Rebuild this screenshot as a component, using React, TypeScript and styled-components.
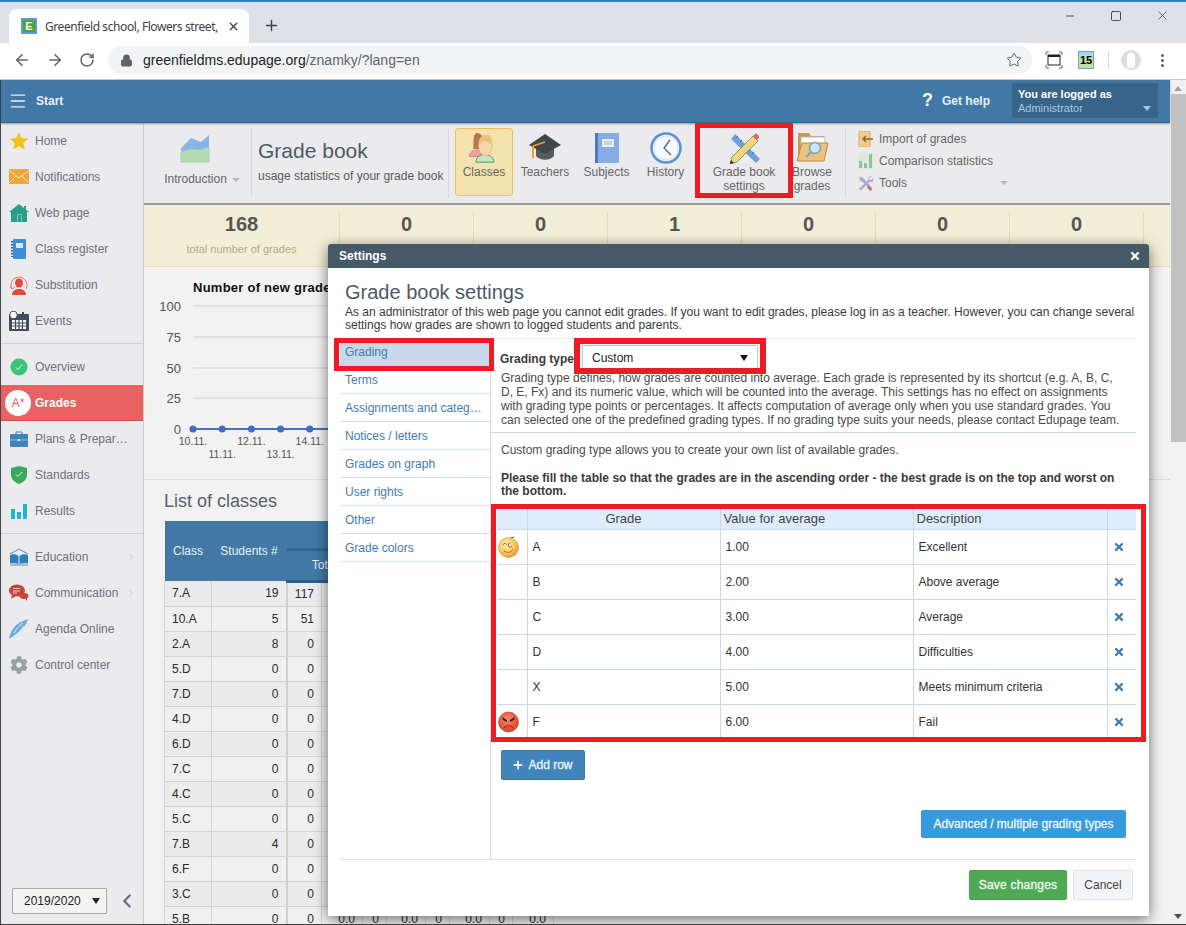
import React from 'react';
import styled, { createGlobalStyle } from 'styled-components';
import { ArrowLeft, ArrowRight, RotateCw, Lock, Star, X, Plus, Minus, Square, Menu, ChevronLeft, ChevronRight } from 'lucide-react';
import { FaCog, FaTimes, FaPlus } from 'react-icons/fa';

const GlobalStyle = createGlobalStyle`
    html, body {
        margin: 0;
        padding: 0;
        height: 925px;
        overflow: hidden;
        font-family: "Liberation Sans", Arial, sans-serif;
        font-size: 12px;
        color: #333;
    }
    * { box-sizing: border-box; }
`;

const Root = styled.div`
    position: relative;
    width: 1186px;
    height: 925px;
    overflow: hidden;
    display: flex;
    flex-direction: column;
    border-top: 2px solid #1b86d8;
    border-bottom: 1px solid #3d3f34;
`;

/* browser chrome */
const TabStrip = styled.div`
    height: 41px;
    flex: none;
    background: #dee1e6;
    display: flex;
    align-items: flex-end;
    padding-left: 9px;
`;
const Tab = styled.div`
    width: 240px;
    height: 34px;
    background: #fff;
    border-radius: 8px 8px 0 0;
    display: flex;
    align-items: center;
    padding-left: 12px;
    color: #3c4043;
`;
const Favicon = styled.span`
    width: 16px;
    height: 16px;
    flex: none;
    background: #fff;
    border: 2px solid #5a9bd8;
    color: #fff;
    font: bold 11px/12px "Liberation Sans", sans-serif;
    text-align: center;
    span {
        display: block;
        background: #4aa52c;
        height: 12px;
    }
`;
const TabTitle = styled.span`
    width: 173px;
    margin-left: 8px;
    overflow: hidden;
    white-space: nowrap;
    font-size: 12px;
    font-family: "Noto Sans", sans-serif;
    letter-spacing: -0.42px;
`;
const TabClose = styled.span`
    margin-left: 9px;
    display: flex;
    color: #45484c;
`;
const NewTab = styled.span`
    margin: 0 0 9px 14px;
    display: flex;
    color: #3c4043;
`;
const WindowButtons = styled.div`
    margin: 0 0 auto auto;
    display: flex;
    padding-right: 1px;
`;
const WindowButton = styled.span`
    width: 46px;
    height: 27px;
    display: flex;
    align-items: center;
    justify-content: center;
    color: #222;
`;
const BrowserBar = styled.div`
    height: 37px;
    flex: none;
    background: #fff;
    border-bottom: 1px solid #c8c9cb;
    display: flex;
    align-items: center;
    padding: 0 0 2px 13px;
`;
const NavIcon = styled.span`
    width: 18px;
    margin-right: 15px;
    display: flex;
    color: #5f6368;
`;
const Omnibox = styled.div`
    width: 924px;
    height: 28px;
    margin-left: -4px;
    background: #f1f3f4;
    border-radius: 14px;
    display: flex;
    align-items: center;
    padding-left: 12px;
    color: #5f6368;
    font-size: 14px;
`;
const Url = styled.span`
    margin-left: 10px;
    b { font-weight: normal; color: #222; }
`;
const OmniStar = styled.span`
    margin-left: auto;
    margin-right: 10px;
    display: flex;
    color: #5f6368;
`;
const ExtIcon = styled.span`
    margin-left: 13px;
    display: flex;
`;
const Badge15 = styled.span`
    width: 16px;
    height: 18px;
    margin-left: 15px;
    background: linear-gradient(#a8d4f0 0 3px, #bfe3a8 3px);
    border: 1px solid #6ba4d8;
    color: #000;
    font: bold 11px/17px "Liberation Sans", sans-serif;
    text-align: center;
`;
const BarDivider = styled.span`
    width: 1px;
    height: 18px;
    margin-left: 14px;
    background: #d5d7da;
`;
const Avatar = styled.span`
    width: 20px;
    height: 20px;
    margin-left: 12px;
    border-radius: 50%;
    background: #dcdcdc;
    display: flex;
    align-items: center;
    justify-content: center;
    &::after {
        content: '';
        width: 8px;
        height: 15px;
        border-radius: 4px 4px 2px 2px;
        background: #fff;
    }
`;
const Dots = styled.span`
    margin-left: 20px;
    display: flex;
    flex-direction: column;
    gap: 2px;
    i {
        width: 3px;
        height: 3px;
        border-radius: 50%;
        background: #5f6368;
    }
`;

/* app frame */
const Page = styled.div`
    flex: 1;
    min-height: 0;
    display: flex;
    border-left: 1px solid #3d4650;
`;
const AppColumn = styled.div`
    width: 1169px;
    display: flex;
    flex-direction: column;
`;
const Scrollbar = styled.div`
    width: 16px;
    background: #f1f1f1;
    display: flex;
    flex-direction: column;
    align-items: center;
    &::before {
        content: '';
        margin: 6px 0 3px;
        border: 4px solid transparent;
        border-top: 0;
        border-bottom: 5px solid #a3a3a3;
    }
    &::after {
        content: '';
        margin-top: auto;
        margin-bottom: 5px;
        border: 4px solid transparent;
        border-bottom: 0;
        border-top: 5px solid #505050;
    }
`;
const ScrollThumb = styled.div`
    width: 15px;
    height: 348px;
    background: #c1c1c1;
`;
const AppHeader = styled.header`
    height: 43px;
    flex: none;
    background: #4178a6;
    border-bottom: 1px solid #35648a;
    box-shadow: 0 1px 2px rgba(0, 0, 0, 0.35);
    position: relative;
    z-index: 1;
    display: flex;
    align-items: center;
    padding: 0 12px 1px 7px;
    color: #fff;
    font-weight: bold;
`;
const StartLabel = styled.span`
    margin-left: 8px;
    color: #e8f0f6;
`;
const HelpLink = styled.span`
    margin-left: auto;
    display: flex;
    align-items: center;
    gap: 9px;
    color: #e8f0f6;
`;
const HelpMark = styled.span`
    font-size: 18px;
    color: #fff;
`;
const UserBox = styled.div`
    width: 146px;
    height: 35px;
    margin-left: 22px;
    padding: 4px 6px;
    background: #38648a;
    border-radius: 2px;
    position: relative;
    font-size: 11px;
    line-height: 14px;
    em {
        display: block;
        font-style: normal;
        font-weight: normal;
        color: #a9c5e2;
    }
    &::after {
        content: '';
        position: absolute;
        right: 7px;
        bottom: 7px;
        border: 4px solid transparent;
        border-bottom: 0;
        border-top: 5px solid #a9c5e2;
    }
`;
const Body = styled.div`
    flex: 1;
    min-height: 0;
    display: flex;
`;

/* sidebar */
const Sidebar = styled.nav`
    width: 143px;
    flex: none;
    background: #ebebed;
    border-right: 1px solid #c9c9cb;
    display: flex;
    flex-direction: column;
    padding-bottom: 10px;
`;
const SideItem = styled.div<{ $active?: boolean }>`
    height: 36px;
    flex: none;
    display: flex;
    align-items: center;
    padding-left: 8px;
    color: ${p => (p.$active ? '#fff' : '#6f6f80')};
    font-weight: ${p => (p.$active ? 'bold' : 'normal')};
    background: ${p => (p.$active ? '#e96161' : 'transparent')};
    border-bottom: ${p => (p.$active ? '1px solid #d65050' : '0')};
`;
const SideIcon = styled.span`
    width: 20px;
    height: 22px;
    margin-right: 6px;
    flex: none;
    display: flex;
    align-items: center;
    justify-content: center;
`;
const GradeBubble = styled.span`
    width: 26px;
    height: 26px;
    margin: 0 4px 0 -4px;
    flex: none;
    border-radius: 50%;
    background: #fff;
    color: #e25c5c;
    font: 12px/26px "Liberation Sans", sans-serif;
    text-align: center;
`;
const SideMore = styled.span`
    margin-left: auto;
    margin-right: 6px;
    display: flex;
    color: #ccc;
`;
const SideDivider = styled.hr<{ $top: number; $bottom: number }>`
    width: 100%;
    margin: ${p => p.$top}px 0 ${p => p.$bottom}px;
    border: 0;
    border-top: 1px solid #d0d0d2;
`;
const YearRow = styled.div`
    margin-top: auto;
    padding-left: 11px;
    display: flex;
    align-items: center;
    gap: 9px;
    color: #5f7488;
`;
const YearSelect = styled.div`
    width: 95px;
    height: 26px;
    padding: 0 6px 0 11px;
    background: #f4f4f4;
    border: 1px solid #a9a9a9;
    border-radius: 1px;
    color: #222;
    display: flex;
    align-items: center;
    justify-content: space-between;
    &::after {
        content: '';
        border: 4px solid transparent;
        border-bottom: 0;
        border-top: 6px solid #222;
    }
`;

/* content */
const Content = styled.main`
    flex: 1;
    min-width: 0;
    background: #f2f2f2;
    overflow: hidden;
`;
const Toolbar = styled.div`
    height: 82px;
    background: #ebebed;
    border-bottom: 2px solid #96999c;
    display: flex;
    align-items: flex-start;
    padding-top: 5px;
    color: #666;
`;
const IntroBlock = styled.div`
    width: 108px;
    height: 70px;
    border-right: 1px solid #d9d9db;
    display: flex;
    flex-direction: column;
    align-items: center;
    padding: 3px 0 0 9px;
    gap: 9px;
    white-space: nowrap;
    svg { margin-right: 14px; }
`;
const Caret = styled.span`
    display: inline-block;
    margin-left: 5px;
    vertical-align: 1px;
    border: 4px solid transparent;
    border-bottom: 0;
    border-top: 4px solid #bbb;
`;
const TitleBlock = styled.div`
    width: 197px;
    height: 70px;
    border-right: 1px solid #d9d9db;
    padding: 10px 0 0 6px;
    white-space: nowrap;
    h1 {
        margin: 0 0 5px;
        font-size: 21px;
        line-height: 26px;
        font-weight: normal;
        color: #4c5a68;
    }
    p {
        margin: 0;
        color: #5a5a5a;
    }
`;
const ToolButton = styled.div<{ $w: number; $active?: boolean }>`
    width: ${p => p.$w}px;
    height: 68px;
    flex: none;
    display: flex;
    flex-direction: column;
    align-items: center;
    padding-top: 3px;
    line-height: 14px;
    text-align: center;
    border-radius: 3px;
    border: 1px solid ${p => (p.$active ? '#eebf4f' : 'transparent')};
    background: ${p => (p.$active ? '#f4e3ae' : 'transparent')};
    svg { flex: none; margin-bottom: 1px; }
`;
const ToolGroup = styled.div`
    display: flex;
    margin-left: 6px;
`;
const ToolLinks = styled.div`
    width: 163px;
    height: 70px;
    margin-left: 14px;
    border-left: 1px solid #d9d9db;
    padding: 3px 0 0 12px;
    display: flex;
    flex-direction: column;
    gap: 6px;
`;
const ToolLink = styled.div`
    height: 16px;
    display: flex;
    align-items: center;
    gap: 5px;
    white-space: nowrap;
    svg { flex: none; width: 16px; }
`;
const ToolsCaret = styled(Caret)`
    margin-left: auto;
    margin-right: 0;
    flex: none;
`;
const StatsBand = styled.div`
    height: 62px;
    background: #f3eed6;
    border-bottom: 1px solid #e6dcb0;
    display: grid;
    grid-template-columns: 196px repeat(6, 134px);
    padding-top: 7px;
`;
const StatCell = styled.div`
    height: 32px;
    border-right: 1px solid #e6dcb8;
    text-align: center;
    strong {
        display: block;
        font-size: 20px;
        line-height: 25px;
        color: #555;
    }
    span {
        display: block;
        margin-top: 6px;
        font-size: 11px;
        white-space: nowrap;
        color: #b4a988;
    }
`;
const ChartSection = styled.section`
    height: 213px;
    border-bottom: 1px solid #dcdcdc;
    padding-top: 13px;
    h4 {
        margin: 0 0 -1px 49px;
        font-size: 13px;
        line-height: 16px;
        letter-spacing: 0.25px;
        color: #111;
        white-space: nowrap;
    }
    svg { display: block; }
`;
const ListSection = styled.section`
    padding: 10px 0 0 20px;
    h3 {
        margin: 0 0 9px;
        font-size: 18px;
        line-height: 22px;
        font-weight: normal;
        color: #56606e;
    }
`;
const ClassTable = styled.table`
    width: 389px;
    table-layout: fixed;
    border-collapse: collapse;
    thead th {
        background: #4178a6;
        color: #e8f0f6;
        font-weight: normal;
        height: 30px;
        padding: 0;
    }
    thead tr:last-child th { border-bottom: 3px solid #2f5f88; }
    tbody td {
        height: 25px;
        padding: 0 7px;
        color: #2a2a2a;
        background: #f0f0f0;
        border: 1px solid #d2d2d2;
        border-top: 0;
        text-align: right;
    }
    tbody tr:nth-child(odd) td { background: #ebebeb; }
    tbody td:first-child { text-align: left; }
    tbody td:nth-child(2) { border-right: 2px solid #cfcfcf; }
`;
const GroupHead = styled.th`
    vertical-align: bottom;
    &::before {
        content: '';
        display: block;
        height: 3px;
        background: #35648a;
    }
`;

/* settings dialog */
const Dialog = styled.div`
    position: absolute;
    left: 328px;
    top: 242px;
    width: 821px;
    height: 672px;
    background: #fff;
    border-radius: 3px 3px 0 0;
    box-shadow: 0 3px 14px rgba(0, 0, 0, 0.55);
    display: flex;
    flex-direction: column;
    z-index: 2;
`;
const DialogBar = styled.div`
    height: 24px;
    flex: none;
    background: #465966;
    border-radius: 3px 3px 0 0;
    padding: 0 8px 0 11px;
    display: flex;
    align-items: center;
    justify-content: space-between;
    color: #fff;
    font-weight: bold;
`;
const DialogHead = styled.div`
    padding: 12px 12px 0 17px;
    h2 {
        margin: 0 0 2px;
        font-size: 20px;
        line-height: 24px;
        font-weight: normal;
        color: #4c5a68;
    }
    p {
        margin: 0;
        line-height: 13px;
        color: #3a3a3a;
    }
`;
const DialogColumns = styled.div`
    height: 522px;
    flex: none;
    margin: 6px 13px 0 12px;
    border-top: 1px solid #e8edf2;
    border-bottom: 1px solid #d5dce3;
    display: flex;
`;
const DialogNav = styled.div`
    width: 151px;
    flex: none;
    margin-top: -1px;
    border-right: 1px solid #c7d9ea;
`;
const NavEntry = styled.div<{ $active?: boolean }>`
    height: 28px;
    padding-left: 5px;
    display: flex;
    align-items: center;
    color: #3f7cb0;
    white-space: nowrap;
    border-bottom: ${p => (p.$active ? '0' : '1px solid #d3dfeb')};
    background: ${p => (p.$active ? '#c9d9e9' : 'transparent')};
    box-shadow: ${p => (p.$active ? 'inset 0 3px 0 #fff' : 'none')};
`;
const DialogMain = styled.div`
    flex: 1;
    min-width: 0;
    padding-top: 6px;
    display: flex;
    flex-direction: column;
`;
const TypeRow = styled.div`
    height: 26px;
    padding: 1px 0 0 9px;
    display: flex;
    align-items: center;
    font-weight: bold;
    color: #3a3a3a;
`;
const TypeSelect = styled.div`
    width: 176px;
    height: 26px;
    margin: -1px 0 0 8px;
    padding: 0 9px;
    border: 1px solid #c4c4c4;
    display: flex;
    align-items: center;
    justify-content: space-between;
    font-weight: normal;
    color: #222;
    &::after {
        content: '';
        border: 4px solid transparent;
        border-bottom: 0;
        border-top: 6px solid #111;
    }
`;
const HelpText = styled.p`
    margin: 0;
    padding: 0 10px 5px;
    line-height: 14px;
    color: #4a4a4a;
    border-bottom: 1px solid #c7d9ea;
`;
const PlainText = styled.p`
    margin: 10px 0 0;
    padding-left: 10px;
    line-height: 14px;
    color: #4a4a4a;
`;
const BoldText = styled.p`
    margin: 15px 0 0;
    padding: 0 10px;
    line-height: 13px;
    font-weight: bold;
    color: #3a3a3a;
`;
const GradeTable = styled.table`
    width: 639px;
    margin: 11px 0 0 6px;
    table-layout: fixed;
    border-collapse: collapse;
    th, td {
        border-left: 1px solid #c7d9ea;
        border-bottom: 1px solid #c7d9ea;
        padding: 0 5px;
        text-align: left;
        color: #333;
    }
    th:first-child, td:first-child { border-left: 0; padding: 0 0 0 1px; }
    th {
        height: 20px;
        padding: 0 3px;
        background: #deecfb;
        font-size: 13px;
        font-weight: normal;
        color: #444;
    }
    td { height: 35px; }
    td svg { display: block; }
`;
const CenterHead = styled.th`
    && { text-align: center; }
`;
const RemoveCell = styled.td`
    && { padding: 0 6px 0 0; color: #3f7cb0; }
    svg { margin: 0 auto; }
`;
const AddRow = styled.button`
    width: 84px;
    height: 30px;
    margin: 10px 0 0 10px;
    padding: 0;
    border: 1px solid #3a76aa;
    border-radius: 2px;
    background: #4185bd;
    color: #e8f2fa;
    font: 12px "Liberation Sans", sans-serif;
    -webkit-text-stroke: 0.35px #e8f2fa;
    display: flex;
    align-items: center;
    justify-content: center;
    gap: 5px;
`;
const AdvancedButton = styled.button`
    width: 205px;
    height: 28px;
    margin: 30px 10px 0 auto;
    padding: 0;
    border: 0;
    border-radius: 2px;
    background: #369ade;
    color: #e8f4fc;
    font: 12px "Liberation Sans", sans-serif;
    -webkit-text-stroke: 0.35px #e8f4fc;
`;
const DialogFooter = styled.div`
    padding: 10px 16px 0 0;
    display: flex;
    justify-content: flex-end;
    gap: 6px;
`;
const SaveButton = styled.button`
    width: 98px;
    height: 30px;
    padding: 0;
    border: 1px solid #4aa14f;
    border-radius: 2px;
    background: #50a955;
    color: #eef8ee;
    font: 12px "Liberation Sans", sans-serif;
    letter-spacing: 0.2px;
    -webkit-text-stroke: 0.35px #eef8ee;
`;
const CancelButton = styled.button`
    width: 60px;
    height: 30px;
    padding: 0;
    border: 1px solid #dfe2e8;
    border-radius: 2px;
    background: #f3f4f8;
    color: #444;
    font: 12px "Liberation Sans", sans-serif;
`;
const RedBox = styled.div<{ $l: number; $t: number; $w: number; $h: number; $b: number }>`
    position: absolute;
    left: ${p => p.$l}px;
    top: ${p => p.$t - 2}px;
    width: ${p => p.$w}px;
    height: ${p => p.$h}px;
    border: ${p => p.$b}px solid #ed1c24;
    z-index: 3;
    pointer-events: none;
`;

/* drawn icons */
const StarIcon = () => (
    <svg width="20" height="20" viewBox="0 0 20 20"><path d="M10 1l2.7 6 6.6.7-5 4.4 1.5 6.5L10 15.200 4.200 18.600l1.500-6.500-5-4.400 6.600-.7z" fill="#efc31d" /></svg>
);
const MailIcon = () => (
    <svg width="20" height="16" viewBox="0 0 20 16"><rect width="20" height="15" fill="#eca63a" /><path d="M0 1l10 8 10-8M0 14l7-7M20 14l-7-7" stroke="#fbe6bf" fill="none" /></svg>
);
const HouseIcon = () => (
    <svg width="20" height="20" viewBox="0 0 20 20"><path d="M10 1L0 9h2v10h16V9h2l-3-2.400V3h-2v2z" fill="#2c9e88" /><rect x="8" y="11" width="5" height="8" fill="#6cc4b2" /><rect x="9" y="12" width="3" height="7" fill="#2c9e88" /></svg>
);
const RegisterIcon = () => (
    <svg width="16" height="20" viewBox="0 0 16 20"><rect x="2" width="13" height="20" rx="1" fill="#3e8fd6" /><path d="M1 2v16" stroke="#1d5e99" strokeWidth="2" strokeDasharray="1.500 1.500" /><rect x="5" y="4" width="7" height="5" fill="#d5e8f8" /></svg>
);
const SubstIcon = () => (
    <svg width="20" height="20" viewBox="0 0 20 20"><path d="M3 14A8 8 0 1 1 17 14" fill="none" stroke="#e8796d" /><path d="M1 11l2 3 3-2" fill="none" stroke="#e8796d" /><ellipse cx="10" cy="8" rx="4" ry="4.500" fill="#de4b3b" /><path d="M3 20c0-4 3-5 5-6h4c2 1 5 2 5 6z" fill="#de4b3b" /></svg>
);
const EventsIcon = () => (
    <svg width="20" height="20" viewBox="0 0 20 20"><rect y="3" width="20" height="17" rx="1" fill="#3f4d5c" /><rect x="3" y="9" width="14" height="9" fill="#fff" /><path d="M3 12h14M3 15h14M6.500 9v9M10 9v9M13.500 9v9" stroke="#3f4d5c" strokeWidth="1.200" /><circle cx="4.500" cy="4" r="3.800" fill="#fff" stroke="#3f4d5c" /><rect x="13" y="1" width="2" height="4" fill="#3f4d5c" /></svg>
);
const CheckIcon = () => (
    <svg width="18" height="18" viewBox="0 0 18 18"><circle cx="9" cy="9" r="8.500" fill="#3cc47c" /><path d="M6 9.500l2 2 4-5" stroke="#e4f8ec" fill="none" /></svg>
);
const CaseIcon = () => (
    <svg width="18" height="16" viewBox="0 0 18 16"><path d="M6 3V1h6v2" fill="none" stroke="#3d84ba" /><rect y="3" width="18" height="13" rx="1" fill="#3d84ba" /><path d="M0 9h18" stroke="#8ebcdc" /><rect x="8" y="8" width="2" height="2" fill="#e3f0fa" /></svg>
);
const ShieldIcon = () => (
    <svg width="16" height="18" viewBox="0 0 16 18"><path d="M8 0l8 2v7c0 4-3 7-8 9-5-2-8-5-8-9V2z" fill="#3ca85a" /><path d="M5 8.500l2 2 4-4.500" stroke="#e4f8ec" fill="none" /></svg>
);
const BarsIcon = () => (
    <svg width="16" height="16" viewBox="0 0 16 16"><rect y="6" width="4" height="10" fill="#1fb6d0" /><rect x="6" y="9" width="4" height="7" fill="#1fb6d0" /><rect x="12" y="1" width="4" height="15" fill="#1fb6d0" /></svg>
);
const BookIcon = () => (
    <svg width="20" height="18" viewBox="0 0 20 18"><path d="M1 6l9-5 9 5" fill="none" stroke="#4a8fc2" /><path d="M1 7c3-1 6-1 8.500 1v8C7 15 4 15 1 15.500zM19 7c-3-1-6-1-8.500 1v8c2.500-1 5.500-1 8.500-.5z" fill="#2f7fb8" /><path d="M1 17h18" stroke="#4a8fc2" /></svg>
);
const ChatIcon = () => (
    <svg width="20" height="18" viewBox="0 0 20 18"><ellipse cx="8" cy="6.500" rx="8" ry="6" fill="#c8433a" /><path d="M3 11l-1 4 5-3z" fill="#c8433a" /><path d="M4 4.500h7M4 7h7M4 9h4" stroke="#f5d0cc" /><ellipse cx="15" cy="12" rx="4.500" ry="3" fill="#c8433a" /><path d="M16 14l2 3 0-4z" fill="#c8433a" /></svg>
);
const PenIcon = () => (
    <svg width="20" height="20" viewBox="0 0 20 20"><path d="M0 20c1-6 4-12 10-16 3-2 6-3 9-4-1 3-2 6-5 9-3 4-8 7-14 11z" fill="#6aaede" /><path d="M5 14c2-4 5-7 9-10M9 14l6-7" stroke="#ebebed" fill="none" /></svg>
);
const ChartIcon = () => (
    <svg width="30" height="32" viewBox="0 0 30 32"><path d="M1 17L11 7l10 4 8-7v16H1z" fill="#88b4e8" /><path d="M1 21l10-3 9 1 9-3v15H1z" fill="#b5dbb5" stroke="#a3cfa9" /></svg>
);
const PeopleIcon = () => (
    <svg width="32" height="32" viewBox="0 0 33 34"><path d="M9 1c5 0 7 4 6 10l-1 7H5c1-7-1-16 4-17z" fill="#b3764e" /><path d="M1 25c1-5 6-6 10-6l5 7H1z" fill="#ec9fa6" stroke="#d47f88" /><path d="M8 32c0-6 5-8 9-8s10 2 10 8z" fill="#c7e6c8" stroke="#3c9a55" /><ellipse cx="18" cy="15" rx="7" ry="10" fill="#f6d8ae" stroke="#e4bb82" /><path d="M11 14c-1-7 3-11 8-11s7 5 6 11c-2-3-7-4-9-5-1 2-3 3-5 5z" fill="#e8c27a" /></svg>
);
const CapIcon = () => (
    <svg width="34" height="32" viewBox="0 0 34 32"><path d="M8 14v10c4 5 14 5 18 0V14z" fill="#56595e" /><path d="M17 2l16 11-16 9L1 13z" fill="#40464c" /><path d="M5 14l12-4" stroke="#f0a020" strokeWidth="1.500" /><path d="M5 14v12" stroke="#f0a020" strokeWidth="2" /></svg>
);
const NotebookIcon = () => (
    <svg width="26" height="32" viewBox="0 0 26 32"><rect x="1" y="1" width="24" height="30" rx="1" fill="#86aee4" /><rect x="1" y="1" width="3" height="30" fill="#4a78b8" /><rect x="8" y="7" width="12" height="8" fill="#e6effa" /><path d="M10 10h8M10 12h8" stroke="#9db8d8" /></svg>
);
const ClockIcon = () => (
    <svg width="32" height="32" viewBox="0 0 32 32"><circle cx="16" cy="16" r="14.500" fill="#f8fbff" stroke="#5c90d6" strokeWidth="2.500" /><circle cx="16" cy="16" r="12" fill="none" stroke="#cfe0f5" /><path d="M20 8l-6 8 7 7" stroke="#59626b" strokeWidth="1.300" fill="none" /></svg>
);
const SettingsIcon = () => (
    <svg width="32" height="32" viewBox="0 0 32 32"><path d="M3 7l4-5 25 25-4 4z" fill="#6fa0dc" /><path d="M8 6l2-2M12 10l2-2M16 14l2-2M20 18l2-2M24 22l2-2" stroke="#3c6eaf" /><path d="M4 25L25 4l5 5L9 30l-7 2z" fill="#f2d77c" stroke="#5a5a3a" strokeWidth=".6" /><path d="M25 4l2-2c1-1 2 0 3 1s1 2 1 3l-2 2z" fill="#d96868" /><path d="M2 32l1-4 3 3z" fill="#333" /></svg>
);
const FolderIcon = () => (
    <svg width="33" height="32" viewBox="0 0 33 32"><path d="M2 1h11l2 3h13v24H2z" fill="#c79a4c" /><rect x="5" y="5" width="24" height="14" fill="#fff" stroke="#bbb" /><path d="M6 11h26l-4 18H1z" fill="#eec27c" stroke="#b98d45" /><circle cx="19" cy="16" r="5.500" fill="#cfe6f4" stroke="#7ba3bd" strokeWidth="1.500" /><path d="M15 20l-5 5" stroke="#7ba3bd" strokeWidth="2" /></svg>
);
const ImportIcon = () => (
    <svg width="16" height="16" viewBox="0 0 16 16"><rect x="1" width="11" height="16" fill="#f0cd8e" stroke="#d6ae68" /><path d="M15 8H5M8 5L5 8l3 3" stroke="#8b6a2a" fill="none" strokeWidth="1.500" /></svg>
);
const CompareIcon = () => (
    <svg width="16" height="16" viewBox="0 0 16 16"><rect width="16" height="16" fill="#dcebdc" /><rect x="1" y="8" width="3" height="7" fill="#8cc49a" /><rect x="6" y="10" width="3" height="5" fill="#8cc49a" /><rect x="11" y="1" width="3" height="14" fill="#8cc49a" /></svg>
);
const ToolsIcon = () => (
    <svg width="17" height="17" viewBox="0 0 17 17"><path d="M1 3l2-2 3 2 9 10-2 2-9-9H3z" fill="#a9b2c8" /><path d="M15 1c-3-1-5 1-4 4L1 14l2 2 9-9c3 1 5-1 4-4l-2 2-2-1 0-2z" fill="#b3a6cf" /><path d="M11 11l4 4-1.500 1.500-4-4z" fill="#d95a5a" /></svg>
);
const WinkSmiley = () => (
    <svg width="21" height="22" viewBox="0 0 21 22">
        <defs><radialGradient id="wink" cx="40%" cy="35%" r="70%"><stop offset="0" stopColor="#fff2b8" /><stop offset=".6" stopColor="#fbc45c" /><stop offset="1" stopColor="#ee8f38" /></radialGradient></defs>
        <circle cx="10.500" cy="11.500" r="10" fill="url(#wink)" stroke="#d98a3a" strokeWidth=".6" />
        <path d="M5 9c1-2 3-2 4 0M12 7a2 2 0 1 0 2 3" stroke="#8a5a1e" fill="none" />
        <path d="M6 15c3 2 7 2 9-2" stroke="#b06a20" fill="none" />
        <path d="M13 2l3-1" stroke="#555" />
    </svg>
);
const AngrySmiley = () => (
    <svg width="21" height="22" viewBox="0 0 21 22">
        <defs><radialGradient id="angry" cx="45%" cy="35%" r="70%"><stop offset="0" stopColor="#fb8a6a" /><stop offset="1" stopColor="#d93a20" /></radialGradient></defs>
        <circle cx="10.500" cy="11" r="10" fill="url(#angry)" stroke="#a8321f" strokeWidth=".6" />
        <path d="M4 6l5 3v2L5 9zM17 6l-5 3v2l4-2z" fill="#222" />
        <path d="M6 17c2-3 7-3 9 0" stroke="#8c1f10" fill="none" />
    </svg>
);
const ScreenCapture = () => (
    <svg width="18" height="18" viewBox="0 0 18 18">
        <path d="M1 4V1h3M14 1h3v3M17 14v3h-3M4 17H1v-3" stroke="#3a8a3a" fill="none" />
        <rect x="3" y="4" width="12" height="10" fill="none" stroke="#222" /><rect x="3" y="4" width="12" height="2" fill="#222" />
    </svg>
);

const sideTop: [string, React.ReactNode][] = [
    ['Home', <StarIcon />], ['Notifications', <MailIcon />], ['Web page', <HouseIcon />],
    ['Class register', <RegisterIcon />], ['Substitution', <SubstIcon />], ['Events', <EventsIcon />],
];
const classes: [string, number, number][] = [
    ['7.A', 19, 117], ['10.A', 5, 51], ['2.A', 8, 0], ['5.D', 0, 0], ['7.D', 0, 0], ['4.D', 0, 0], ['6.D', 0, 0],
    ['7.C', 0, 0], ['4.C', 0, 0], ['5.C', 0, 0], ['7.B', 4, 0], ['6.F', 0, 0], ['3.C', 0, 0], ['5.B', 0, 0],
];
// only the last row shows these, the dialog covers them on every other row
const lastRowCells = ['0.0', '0', '0.0', '0', '0.0', '0', '0.0'];
const grades: [string, string, string, React.ReactNode?][] = [
    ['A', '1.00', 'Excellent', <WinkSmiley />], ['B', '2.00', 'Above average'], ['C', '3.00', 'Average'],
    ['D', '4.00', 'Difficulties'], ['X', '5.00', 'Meets minimum criteria'], ['F', '6.00', 'Fail', <AngrySmiley />],
];
const settingsNav = ['Grading', 'Terms', 'Assignments and categ…', 'Notices / letters', 'Grades on graph', 'User rights', 'Other', 'Grade colors'];
const chartAxis: [string, number][] = [['100', 11], ['75', 42], ['50', 73], ['25', 103], ['0', 134]];
const chartDays = ['10.11.', '11.11.', '12.11.', '13.11.', '14.11.'];

const NewGradesChart = () => (
    <svg width="1026" height="184" viewBox="0 0 1026 184">
        {chartAxis.map(([label, y]) => (
            <g key={label}>
                <text x="37" y={y + 4.500} textAnchor="end" fontSize="13" fill="#555">{label}</text>
                {label !== '0' && <line x1="49" x2="900" y1={y} y2={y} stroke="#cfcfcf" />}
            </g>
        ))}
        <line x1="49" x2="900" y1="134" y2="134" stroke="#4a6fc0" strokeWidth="2" />
        {chartDays.map((day, i) => (
            <g key={day}>
                <circle cx={49 + i * 29.200} cy="134" r="3.500" fill="#3f6cc4" />
                <text x={49 + i * 29.200} y={i % 2 ? 163 : 150} textAnchor="middle" fontSize="10.500" fill="#555">{day}</text>
            </g>
        ))}
    </svg>
);

export default function App() {
    return (
        <>
            <GlobalStyle />
            <Root>
                <TabStrip>
                    <Tab>
                        <Favicon><span>E</span></Favicon>
                        <TabTitle>Greenfield school, Flowers street,</TabTitle>
                        <TabClose><X size={13} strokeWidth={2.500} /></TabClose>
                    </Tab>
                    <NewTab><Plus size={17} strokeWidth={2} /></NewTab>
                    <WindowButtons>
                        <WindowButton><Minus size={12} strokeWidth={1.500} /></WindowButton>
                        <WindowButton><Square size={12} strokeWidth={1.500} /></WindowButton>
                        <WindowButton><X size={15} strokeWidth={1} /></WindowButton>
                    </WindowButtons>
                </TabStrip>
                <BrowserBar>
                    <NavIcon><ArrowLeft size={18} /></NavIcon>
                    <NavIcon><ArrowRight size={18} /></NavIcon>
                    <NavIcon><RotateCw size={16} strokeWidth={2.200} /></NavIcon>
                    <Omnibox>
                        <Lock size={13} fill="#5f6368" strokeWidth={2} />
                        <Url><b>greenfieldms.edupage.org</b>/znamky/?lang=en</Url>
                        <OmniStar><Star size={16} strokeWidth={1.500} /></OmniStar>
                    </Omnibox>
                    <ExtIcon><ScreenCapture /></ExtIcon>
                    <Badge15>15</Badge15>
                    <BarDivider />
                    <Avatar />
                    <Dots><i /><i /><i /></Dots>
                </BrowserBar>
                <Page>
                    <AppColumn>
                        <AppHeader>
                            <Menu size={20} strokeWidth={1.600} color="#e8f0f6" />
                            <StartLabel>Start</StartLabel>
                            <HelpLink><HelpMark>?</HelpMark>Get help</HelpLink>
                            <UserBox>You are logged as<em>Administrator</em></UserBox>
                        </AppHeader>
                        <Body>
                            <Sidebar>
                                {sideTop.map(([label, icon]) => (
                                    <SideItem key={label}><SideIcon>{icon}</SideIcon>{label}</SideItem>
                                ))}
                                <SideDivider $top={4} $bottom={5} />
                                <SideItem><SideIcon><CheckIcon /></SideIcon>Overview</SideItem>
                                <SideItem $active><GradeBubble>A*</GradeBubble>Grades</SideItem>
                                <SideItem><SideIcon><CaseIcon /></SideIcon>Plans &amp; Prepar…</SideItem>
                                <SideItem><SideIcon><ShieldIcon /></SideIcon>Standards</SideItem>
                                <SideItem><SideIcon><BarsIcon /></SideIcon>Results</SideItem>
                                <SideDivider $top={4} $bottom={5} />
                                <SideItem><SideIcon><BookIcon /></SideIcon>Education<SideMore><ChevronRight size={12} /></SideMore></SideItem>
                                <SideItem><SideIcon><ChatIcon /></SideIcon>Communication<SideMore><ChevronRight size={12} /></SideMore></SideItem>
                                <SideItem><SideIcon><PenIcon /></SideIcon>Agenda Online</SideItem>
                                <SideItem><SideIcon><FaCog size={18} color="#95a1a5" /></SideIcon>Control center</SideItem>
                                <YearRow>
                                    <YearSelect>2019/2020</YearSelect>
                                    <ChevronLeft size={22} strokeWidth={2.500} />
                                </YearRow>
                            </Sidebar>
                            <Content>
                                <Toolbar>
                                    <IntroBlock>
                                        <ChartIcon />
                                        <span>Introduction<Caret /></span>
                                    </IntroBlock>
                                    <TitleBlock>
                                        <h1>Grade book</h1>
                                        <p>usage statistics of your grade book</p>
                                    </TitleBlock>
                                    <ToolGroup>
                                        <ToolButton $w={58} $active><PeopleIcon />Classes</ToolButton>
                                        <ToolButton $w={64}><CapIcon />Teachers</ToolButton>
                                        <ToolButton $w={59}><NotebookIcon />Subjects</ToolButton>
                                        <ToolButton $w={59}><ClockIcon />History</ToolButton>
                                        <ToolButton $w={98}><SettingsIcon />Grade book settings</ToolButton>
                                        <ToolButton $w={38}><FolderIcon />Browse grades</ToolButton>
                                    </ToolGroup>
                                    <ToolLinks>
                                        <ToolLink><ImportIcon />Import of grades</ToolLink>
                                        <ToolLink><CompareIcon />Comparison statistics</ToolLink>
                                        <ToolLink><ToolsIcon />Tools<ToolsCaret /></ToolLink>
                                    </ToolLinks>
                                </Toolbar>
                                <StatsBand>
                                    <StatCell><strong>168</strong><span>total number of grades</span></StatCell>
                                    <StatCell><strong>0</strong></StatCell>
                                    <StatCell><strong>0</strong></StatCell>
                                    <StatCell><strong>1</strong></StatCell>
                                    <StatCell><strong>0</strong></StatCell>
                                    <StatCell><strong>0</strong></StatCell>
                                    <StatCell><strong>0</strong></StatCell>
                                </StatsBand>
                                <ChartSection>
                                    <h4>Number of new grades</h4>
                                    <NewGradesChart />
                                </ChartSection>
                                <ListSection>
                                    <h3>List of classes</h3>
                                    <ClassTable>
                                        <colgroup>
                                            {[47, 75, 35, 41, 24, 39, 24, 40, 23, 41].map((w, i) => <col key={i} width={w} />)}
                                        </colgroup>
                                        <thead>
                                            <tr>
                                                <th rowSpan={2}>Class</th>
                                                <th rowSpan={2}>Students #</th>
                                                <GroupHead colSpan={8} />
                                            </tr>
                                            <tr>
                                                <th colSpan={2}>Total</th>
                                                <th colSpan={6} />
                                            </tr>
                                        </thead>
                                        <tbody>
                                            {classes.map(([name, students, total], row) => (
                                                <tr key={name}>
                                                    <td>{name}</td>
                                                    <td>{students}</td>
                                                    <td>{total}</td>
                                                    {lastRowCells.map((cell, i) => <td key={i}>{row === classes.length - 1 ? cell : ''}</td>)}
                                                </tr>
                                            ))}
                                        </tbody>
                                    </ClassTable>
                                </ListSection>
                            </Content>
                        </Body>
                    </AppColumn>
                    <Scrollbar><ScrollThumb /></Scrollbar>
                </Page>

                <Dialog>
                    <DialogBar>Settings<FaTimes size={12} /></DialogBar>
                    <DialogHead>
                        <h2>Grade book settings</h2>
                        <p>As an administrator of this web page you cannot edit grades. If you want to edit grades, please log in as a teacher. However, you can change several settings how grades are shown to logged students and parents.</p>
                    </DialogHead>
                    <DialogColumns>
                        <DialogNav>
                            {settingsNav.map((entry, i) => <NavEntry key={entry} $active={i === 0}>{entry}</NavEntry>)}
                        </DialogNav>
                        <DialogMain>
                            <TypeRow>Grading type<TypeSelect>Custom</TypeSelect></TypeRow>
                            <HelpText>Grading type defines, how grades are counted into average. Each grade is represented by its shortcut (e.g. A, B, C, D, E, Fx) and its numeric value, which will be counted into the average. This settings has no effect on assignments with grading type points or percentages. It affects computation of average only when you use standard grades. You can selected one of the predefined grading types. If no grading type suits your needs, please contact Edupage team.</HelpText>
                            <PlainText>Custom grading type allows you to create your own list of available grades.</PlainText>
                            <BoldText>Please fill the table so that the grades are in the ascending order - the best grade is on the top and worst on the bottom.</BoldText>
                            <GradeTable>
                                <colgroup>
                                    {[30, 193, 193, 194, 29].map((w, i) => <col key={i} width={w} />)}
                                </colgroup>
                                <thead>
                                    <tr>
                                        <th />
                                        <CenterHead>Grade</CenterHead>
                                        <th>Value for average</th>
                                        <th>Description</th>
                                        <th />
                                    </tr>
                                </thead>
                                <tbody>
                                    {grades.map(([grade, value, text, face]) => (
                                        <tr key={grade}>
                                            <td>{face}</td>
                                            <td>{grade}</td>
                                            <td>{value}</td>
                                            <td>{text}</td>
                                            <RemoveCell><FaTimes size={12} /></RemoveCell>
                                        </tr>
                                    ))}
                                </tbody>
                            </GradeTable>
                            <AddRow><FaPlus size={10} /> Add row</AddRow>
                            <AdvancedButton>Advanced / multiple grading types</AdvancedButton>
                        </DialogMain>
                    </DialogColumns>
                    <DialogFooter>
                        <SaveButton>Save changes</SaveButton>
                        <CancelButton>Cancel</CancelButton>
                    </DialogFooter>
                </Dialog>

                <RedBox $l={695} $t={123} $w={98} $h={75} $b={5} />
                <RedBox $l={334} $t={338} $w={160} $h={33} $b={5} />
                <RedBox $l={574} $t={338} $w={192} $h={36} $b={6} />
                <RedBox $l={491} $t={504} $w={655} $h={238} $b={5} />
            </Root>
        </>
    );
}
